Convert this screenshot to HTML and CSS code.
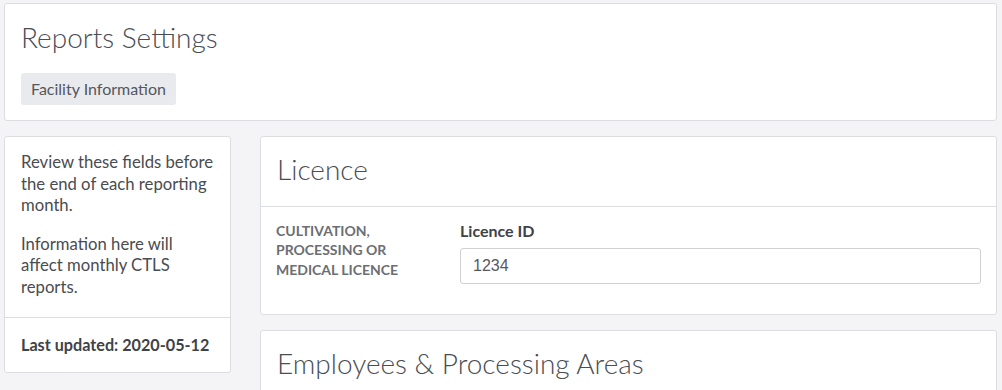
FILE: index.html
```html
<!DOCTYPE html>
<html lang="en">
<head>
<meta charset="utf-8">
<title>Reports Settings</title>
<link rel="stylesheet" href="styles.css">
</head>
<body>
<div class="page">
  <section class="card top-card">
    <h1 class="page-title">Reports Settings</h1>
    <span class="badge">Facility Information</span>
  </section>
  <div class="content">
    <aside class="card side-card">
      <div class="side-body">
        <p>Review these fields before the end of each reporting month.</p>
        <p>Information here will affect monthly CTLS reports.</p>
      </div>
      <div class="side-footer">Last updated: 2020-05-12</div>
    </aside>
    <main class="main">
      <section class="card section-card">
        <div class="section-head"><h2>Licence</h2></div>
        <div class="section-body">
          <div class="field-label">CULTIVATION, PROCESSING OR MEDICAL LICENCE</div>
          <div class="field">
            <label class="input-label" for="licence">Licence ID</label>
            <input class="text-input" id="licence" type="text" value="1234">
          </div>
        </div>
      </section>
      <section class="card section-card">
        <div class="section-head"><h2>Employees &amp; Processing Areas</h2></div>
      </section>
    </main>
  </div>
</div>
</body>
</html>
```
FILE: styles.css
```css
html, body {
  margin: 0;
  padding: 0;
  background: #f4f4f6;
  font-family: Lato, "Open Sans", sans-serif;
  color: #494c50;
}
.page {
  padding: 3px 5px 0 4px;
}
.card {
  background: #fff;
  border: 1px solid #dcdde0;
  border-radius: 3px;
  box-sizing: border-box;
}
.top-card {
  height: 118px;
  padding: 16px 16px 0 16px;
  display: flex;
  flex-direction: column;
  align-items: flex-start;
}
.page-title {
  margin: 0;
  font-weight: 300;
  font-size: 28px;
  line-height: 34px;
  color: #4a4d52;
}
.badge {
  display: block;
  margin-top: 19px;
  padding: 0 10px;
  height: 32px;
  line-height: 32px;
  background: #e9eaee;
  border-radius: 3px;
  font-size: 16px;
  color: #54575c;
}
.content {
  display: flex;
  gap: 29px;
  margin-top: 15px;
  align-items: flex-start;
}
.side-card {
  width: 227px;
  flex: none;
}
.side-body {
  padding: 15px 16px 18px 16px;
  border-bottom: 1px solid #dcdde0;
  font-size: 16.7px;
  line-height: 21.7px;
  color: #494c50;
}
.side-body p {
  margin: 0 0 16.5px 0;
}
.side-body p:last-child {
  margin-bottom: 0;
}
.side-footer {
  padding: 17px 16px 17px 16px;
  font-weight: 700;
  font-size: 16.2px;
  line-height: 20px;
  color: #3f4246;
}
.main {
  flex: 1;
  display: flex;
  flex-direction: column;
  gap: 15px;
}
.section-card {
  overflow: hidden;
}
.section-head {
  height: 69px;
  padding: 15px 16px 0 16px;
  box-sizing: border-box;
}
.section-head h2 {
  margin: 0;
  font-weight: 300;
  font-size: 28px;
  line-height: 34px;
  color: #4a4d52;
}
.section-body {
  border-top: 1px solid #dcdde0;
  padding: 14px 15px 30px 15px;
  display: grid;
  grid-template-columns: 184px 1fr;
}
.field-label {
  font-size: 14px;
  font-weight: 700;
  line-height: 19.3px;
  color: #6b6e73;
  text-transform: uppercase;
  padding-right: 20px;
}
.field {
  display: flex;
  flex-direction: column;
}
.input-label {
  font-weight: 700;
  font-size: 16px;
  line-height: 20px;
  color: #3f4246;
  margin-bottom: 7px;
}
.text-input {
  height: 36px;
  box-sizing: border-box;
  border: 1px solid #cfd0d3;
  border-radius: 3px;
  padding: 0 12px;
  font-family: "Liberation Sans", Arial, sans-serif;
  font-size: 16px;
  color: #555860;
  background: #fff;
  outline: none;
}
```
